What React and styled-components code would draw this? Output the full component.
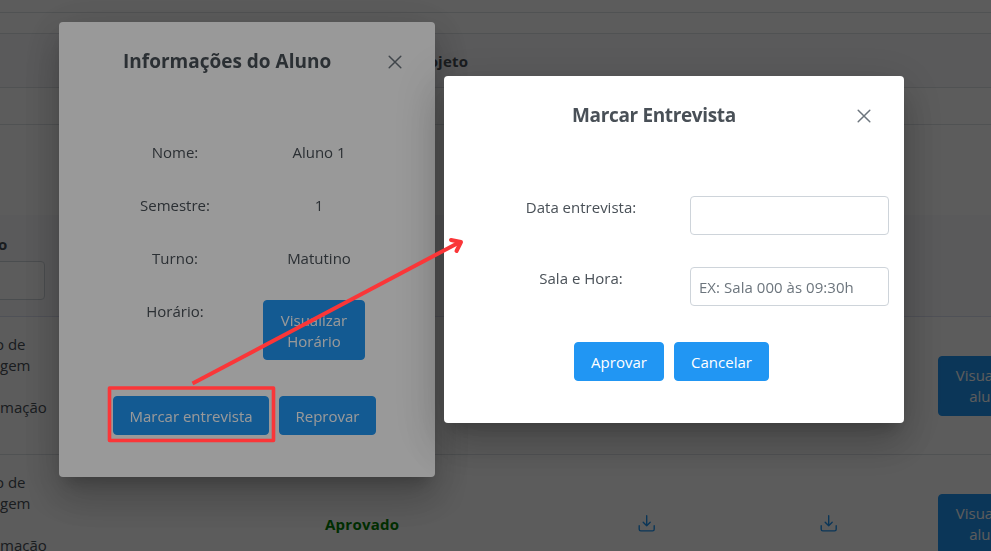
import React from "react";
import styled, { createGlobalStyle } from "styled-components";

const Global = createGlobalStyle`
  *, *::before, *::after { box-sizing: border-box; }
  body { margin: 0; overflow: hidden; }
  body, button, input { font-family: "Open Sans", "Segoe UI", sans-serif; font-size: 15px; }
`;

const Page = styled.main`
  width: 991px;
  height: 551px;
  overflow: hidden;
  display: flex;
  flex-direction: column;
  background: #fff;
  color: #495057;
  line-height: 21px;
`;

const Strip = styled.div`
  flex: none;
  height: ${(p) => p.$h}px;
  border-bottom: 1px solid ${(p) => p.$line || "#dee2e6"};
  background: ${(p) => p.$bg || "#fff"};
`;

const ProjectHeader = styled(Strip)`
  display: flex;
  align-items: center;
  padding: 2px 0 0 412px;
  font-weight: 700;
  letter-spacing: 0.2px;
`;

const FilterHeader = styled(Strip)`
  display: flex;
  flex-direction: column;
  padding-top: 19px;
  gap: 6px;
`;

const ColumnTitle = styled.strong`
  margin-left: -2px;
`;

const FilterInput = styled.input`
  width: 55px;
  height: 39px;
  margin-left: -10px;
  border: 1px solid #ced4da;
  border-radius: 4px;
  background: #fff;
`;

const TableRow = styled.div`
  flex: none;
  height: 138px;
  display: grid;
  grid-template-columns: 200px 324px 245px 119px 1fr;
  align-items: center;
  border-bottom: 1px solid #dee2e6;
`;

const Course = styled.div`
  display: flex;
  flex-direction: column;
  padding-top: 1px;
`;

const CourseLine = styled.span`
  display: block;
  height: 21px;
  margin-left: ${(p) => p.$shift || 0}px;
  white-space: nowrap;
`;

const Status = styled.strong`
  padding: 2px 0 0 125px;
  color: green;
  letter-spacing: 0.25px;
`;

const IconCell = styled.div`
  display: flex;
  justify-content: flex-end;
  padding-right: ${(p) => p.$end || 0}px;
  color: #2196f3;
`;

const ActionCell = styled.div`
  display: flex;
  padding-left: 50px;
`;

const Button = styled.button`
  flex: none;
  width: ${(p) => p.$w}px;
  height: ${(p) => p.$h || 39}px;
  padding: 1px 0 0;
  border: 1px solid #2196f3;
  border-radius: 4px;
  background: #2196f3;
  color: #fff;
  line-height: 21px;
`;

const Mask = styled.div`
  position: fixed;
  inset: 0;
  display: flex;
  align-items: flex-start;
  padding: ${(p) => p.$place};
  background: rgba(0, 0, 0, 0.4);
`;

const Dialog = styled.section`
  flex: none;
  width: ${(p) => p.$w}px;
  height: ${(p) => p.$h}px;
  border-radius: 4px;
  background: #fff;
  color: #495057;
  line-height: 21px;
  box-shadow: 0 11px 15px -7px rgba(0, 0, 0, 0.2), 0 24px 38px 3px rgba(0, 0, 0, 0.14),
    0 9px 46px 8px rgba(0, 0, 0, 0.12);
`;

const DialogHeader = styled.header`
  display: flex;
  align-items: center;
  height: 79px;
  padding-right: 33px;
`;

const DialogTitle = styled.h2`
  flex: 1;
  margin: 0;
  padding-left: ${(p) => p.$left}px;
  font-size: 19px;
  font-weight: 700;
  letter-spacing: ${(p) => p.$track || 0}px;
`;

const InfoGrid = styled.div`
  display: grid;
  grid-template-columns: 144px 144px;
  grid-template-rows: 53px 53px 53px 95px;
  padding: 41px 0 0 44px;
  text-align: center;
`;

const InfoCell = styled.div`
  margin-top: ${(p) => (p.$button ? -1 : 0)}px;
  padding-right: ${(p) => (p.$button ? 10 : 0)}px;
`;

const Actions = styled.div`
  display: flex;
  gap: 10px;
  padding-left: ${(p) => p.$left}px;
`;

const FormGrid = styled.div`
  display: grid;
  grid-template-columns: 218px 199px;
  grid-template-rows: 71px 75px;
  padding: 41px 0 0 28px;
`;

const Label = styled.label`
  padding-top: 1px;
  text-align: center;
`;

const TextInput = styled.input`
  width: 199px;
  height: 39px;
  padding: 0 8px;
  border: 1px solid #ced4da;
  border-radius: 4px;
  color: #495057;
  letter-spacing: 0.04px;
  &::placeholder { color: #6c757d; opacity: 1; }
`;

const Annotation = styled.svg`
  position: fixed;
  inset: 0;
  pointer-events: none;
`;

function CloseIcon() {
  return (
    <svg width="14" height="14" viewBox="0 0 14 14" fill="none" stroke="#6c757d" strokeWidth="1.5" strokeLinecap="round">
      <path d="M1.2 1.2 12.8 12.8M12.8 1.2 1.2 12.8" />
    </svg>
  );
}

function DownloadIcon() {
  return (
    <svg width="18" height="18" viewBox="0 0 18 18" fill="none" stroke="currentColor" strokeWidth="1.4" strokeLinecap="round" strokeLinejoin="round">
      <path d="M8.7 .8V10.8M5.2 7.3 8.7 10.8 12.2 7.3M1.2 10.8V14.3Q1.2 15.9 2.8 15.9H14.6Q16.2 15.9 16.2 14.3V10.8" />
    </svg>
  );
}

function StudentRow({ approved }) {
  return (
    <TableRow>
      <Course>
        <CourseLine $shift={-5}>o de</CourseLine>
        <CourseLine>gem</CourseLine>
        <CourseLine>&nbsp;</CourseLine>
        <CourseLine>mação</CourseLine>
        <CourseLine>&nbsp;</CourseLine>
      </Course>
      <Status>{approved && "Aprovado"}</Status>
      <IconCell $end={113}>{approved && <DownloadIcon />}</IconCell>
      <IconCell $end={50}>{approved && <DownloadIcon />}</IconCell>
      <ActionCell>
        <Button $w={102} $h={60}>Visualizar<br />aluno</Button>
      </ActionCell>
    </TableRow>
  );
}

export default function App() {
  return (
    <>
      <Global />
      <Page>
        <Strip $h={13} />
        <Strip $h={21} />
        <ProjectHeader $h={54} $bg="#f8f8fc">Projeto</ProjectHeader>
        <Strip $h={37} />
        <Strip $h={90} $line="#fff" />
        <FilterHeader $h={102} $bg="#f8f8fc" $line="#dcdff0">
          <ColumnTitle>o</ColumnTitle>
          <FilterInput />
        </FilterHeader>
        <StudentRow />
        <StudentRow approved />
      </Page>

      <Mask $place="22px 0 0 59px">
        <Dialog $w={376} $h={455}>
          <DialogHeader>
            <DialogTitle $left={64}>Informações do Aluno</DialogTitle>
            <CloseIcon />
          </DialogHeader>
          <InfoGrid>
            <InfoCell>Nome:</InfoCell><InfoCell>Aluno 1</InfoCell>
            <InfoCell>Semestre:</InfoCell><InfoCell>1</InfoCell>
            <InfoCell>Turno:</InfoCell><InfoCell>Matutino</InfoCell>
            <InfoCell>Horário:</InfoCell>
            <InfoCell $button><Button $w={102} $h={60}>Visualizar<br />Horário</Button></InfoCell>
          </InfoGrid>
          <Actions $left={54}>
            <Button $w={156}>Marcar entrevista</Button>
            <Button $w={97}>Reprovar</Button>
          </Actions>
        </Dialog>
      </Mask>

      <Mask $place="76px 0 0 444px">
        <Dialog $w={460} $h={347}>
          <DialogHeader>
            <DialogTitle $left={128} $track={-0.35}>Marcar Entrevista</DialogTitle>
            <CloseIcon />
          </DialogHeader>
          <FormGrid>
            <Label>Data entrevista:</Label><TextInput />
            <Label>Sala e Hora:</Label><TextInput placeholder="EX: Sala 000 às 09:30h" />
          </FormGrid>
          <Actions $left={130}>
            <Button $w={90}>Aprovar</Button>
            <Button $w={95}>Cancelar</Button>
          </Actions>
        </Dialog>
      </Mask>

      <Annotation width="991" height="551" fill="none" stroke="#fa3638" strokeLinejoin="round">
        <rect x="109.5" y="388" width="164" height="52.5" strokeWidth="3.6" />
        <path d="M192.5 383.5 460 242" strokeWidth="4" />
        <path d="M451 240 461 242 456.5 251" strokeWidth="4" strokeLinecap="round" />
      </Annotation>
    </>
  );
}
